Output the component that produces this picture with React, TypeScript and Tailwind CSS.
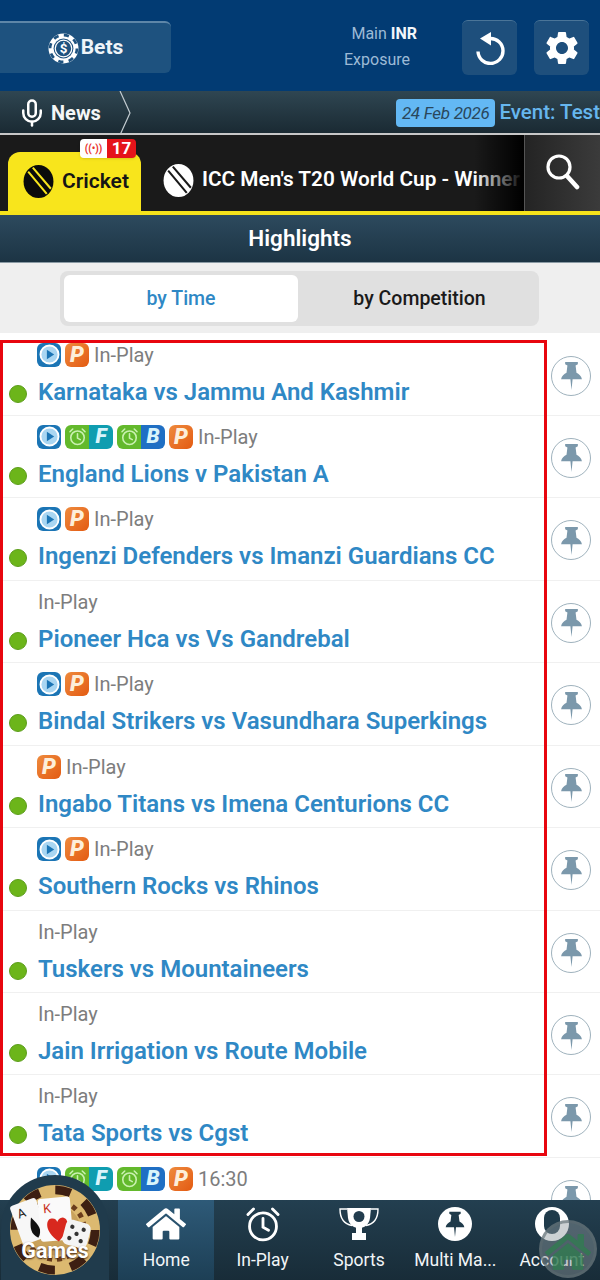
import { Mic } from "lucide-react";
import { MdSettings } from "react-icons/md";
import { FaHome } from "react-icons/fa";

const matches = [
  { name: "Karnataka vs Jammu And Kashmir", icons: ["play", "p"], time: "In-Play" },
  { name: "England Lions v Pakistan A", icons: ["play", "f", "b", "p"], time: "In-Play" },
  { name: "Ingenzi Defenders vs Imanzi Guardians CC", icons: ["play", "p"], time: "In-Play" },
  { name: "Pioneer Hca vs Vs Gandrebal", icons: [], time: "In-Play" },
  { name: "Bindal Strikers vs Vasundhara Superkings", icons: ["play", "p"], time: "In-Play" },
  { name: "Ingabo Titans vs Imena Centurions CC", icons: ["p"], time: "In-Play" },
  { name: "Southern Rocks vs Rhinos", icons: ["play", "p"], time: "In-Play" },
  { name: "Tuskers vs Mountaineers", icons: [], time: "In-Play" },
  { name: "Jain Irrigation vs Route Mobile", icons: [], time: "In-Play" },
  { name: "Tata Sports vs Cgst", icons: [], time: "In-Play" },
  { name: "", icons: ["play", "f", "b", "p"], time: "16:30" },
];

function Ball({ fg, bg, size }: { fg: string; bg: string; size: number }) {
  return (
    <svg className="shrink-0" width={size} height={size} viewBox="0 0 32 32">
      <ellipse cx="16" cy="16" rx="14.5" ry="16" fill={fg} />
      <path d="M10.5 2.5 L28 23 M6 6.5 L24 28" stroke={bg} strokeWidth="2" />
    </svg>
  );
}

function Chip() {
  return (
    <svg className="shrink-0" width="31" height="31" viewBox="0 0 30 30">
      <circle cx="15" cy="15" r="14.5" fill="#fff" />
      <circle cx="15" cy="15" r="13" fill="none" stroke="#1e527f" strokeWidth="2.6" strokeDasharray="5 5.2" />
      <circle cx="15" cy="15" r="9.6" fill="#1e527f" />
      <circle cx="15" cy="15" r="8" fill="none" stroke="#fff" strokeWidth="1.2" />
      <text x="15" y="19.5" textAnchor="middle" fontSize="13" fontWeight="700" fill="#fff" fontFamily="Roboto">$</text>
    </svg>
  );
}

function Refresh() {
  return (
    <svg width="30" height="33" viewBox="0 0 30 33" fill="none">
      <path d="M3 19.5 A12.5 12.5 0 1 0 15 6.5" stroke="#fff" strokeWidth="3.4" />
      <path d="M16 0 L16 13.5 L5 6.5 Z" fill="#fff" />
    </svg>
  );
}

function Magnifier() {
  return (
    <svg width="34" height="36" viewBox="0 0 34 36" fill="none" stroke="#fff">
      <circle cx="13" cy="13" r="11" strokeWidth="3.2" />
      <path d="M21 22 L31 33" strokeWidth="4.6" strokeLinecap="round" />
    </svg>
  );
}

function Alarm({ color, size, sw = 2 }: { color: string; size: number; sw?: number }) {
  return (
    <svg width={size} height={size} viewBox="0 0 24 24" fill="none" stroke={color} strokeWidth={sw} strokeLinecap="round">
      <circle cx="12" cy="13.5" r="8.5" />
      <path d="M12 8.5 V14 L15.5 16" />
      <path d="M2.5 6 L6 2.5 M21.5 6 L18 2.5" />
    </svg>
  );
}

function PlayBadge() {
  return (
    <span className="flex h-6 w-6 shrink-0 items-center justify-center rounded-[6px] bg-[#1b75b5]">
      <svg width="21" height="21" viewBox="0 0 20 20">
        <circle cx="10" cy="10" r="8.6" fill="#a9d6f2" stroke="#fff" strokeWidth="1.8" />
        <path d="M7.5 5.5 L14.5 10 L7.5 14.5 Z" fill="#1b75b5" />
      </svg>
    </span>
  );
}

function PBadge() {
  return (
    <span className="flex h-6 w-6 shrink-0 items-center justify-center rounded-[6px] bg-gradient-to-br from-[#ee8a3c] to-[#e35a0e] text-[22px] leading-none font-black italic text-[#fdeeda]">
      P
    </span>
  );
}

function PairBadge({ letter, color }: { letter: string; color: string }) {
  return (
    <span className="flex h-6 w-12 shrink-0 overflow-hidden rounded-[6px]">
      <span className="flex w-6 items-center justify-center bg-[#63b92c]">
        <Alarm color="#c9f0b0" size={19} />
      </span>
      <span className={`flex w-6 items-center justify-center text-[21px] leading-none font-black italic text-[#d9f4fb] ${color}`}>
        {letter}
      </span>
    </span>
  );
}

function Pin({ color, size }: { color: string; size: number }) {
  return (
    <svg width={size} height={size} viewBox="0 0 24 32" fill={color}>
      <path d="M5 1 H19 V3.5 L16.5 5 L17.5 13 C20 14.5 23 16.5 23.5 20 H13.2 L12 32 L10.8 20 H0.5 C1 16.5 4 14.5 6.5 13 L7.5 5 L5 3.5 Z" />
    </svg>
  );
}

function Trophy() {
  return (
    <svg width="40" height="34" viewBox="0 0 40 34" fill="none">
      <path d="M8 1 H32 L31 11 C30 18 25 21 20 21 C15 21 10 18 9 11 Z" fill="#fff" />
      <circle cx="20" cy="9.5" r="5.5" fill="#223d4e" />
      <path d="M8 2 H1 C1 11 5 17 13 18.5 M32 2 H39 C39 11 35 17 27 18.5" stroke="#fff" strokeWidth="1.4" />
      <path d="M17 20 H23 V26 H27 V33 H13 V26 H17 Z" fill="#fff" />
    </svg>
  );
}

function GamesBadge() {
  return (
    <div className="absolute bottom-0 left-[1px] z-20 h-[105px] w-[108px] rounded-t-full bg-[#203b4c]">
      <svg className="absolute left-[9px] top-[10px]" width="90" height="90" viewBox="0 0 92 92">
        <circle cx="46" cy="46" r="46" fill="#dcb970" />
        <circle cx="46" cy="46" r="41" fill="none" stroke="#3d1f12" strokeWidth="9" strokeDasharray="16 16.2" />
        <circle cx="46" cy="46" r="30" fill="none" stroke="#6b3d1c" strokeWidth="5" strokeDasharray="5 5" />
        <circle cx="46" cy="46" r="26" fill="#c9a25c" />
        <g transform="rotate(-20 20 38)">
          <rect x="6" y="16" width="28" height="42" rx="3" fill="#f7f7f7" />
          <text x="11" y="31" fontSize="13" fill="#222" fontFamily="Roboto">A</text>
          <path d="M23 34 C28 44 30 50 23 56 C17 50 18 44 23 34 Z" fill="#111" />
        </g>
        <g transform="rotate(-5 46 36)">
          <rect x="30" y="13" width="33" height="44" rx="3" fill="#fafafa" />
          <text x="35" y="28" fontSize="13" fill="#c8321f" fontFamily="Roboto">K</text>
          <path d="M48 58 C33 46 37 33 43 34 C46 34 48 36 48 38 C49 36 51 34 54 34 C60 35 62 46 48 58 Z" fill="#d8281e" />
        </g>
        <g transform="rotate(15 68 50)">
          <rect x="55" y="37" width="26" height="26" rx="6" fill="#f4f4f4" />
          <circle cx="62" cy="44" r="2.2" fill="#333" />
          <circle cx="74" cy="44" r="2.2" fill="#333" />
          <circle cx="68" cy="50" r="2.2" fill="#333" />
          <circle cx="62" cy="56" r="2.2" fill="#333" />
          <circle cx="74" cy="56" r="2.2" fill="#333" />
        </g>
      </svg>
      <span className="absolute left-0 top-[60px] w-full text-center text-[21.5px] font-bold text-white [text-shadow:0_1px_2px_#3d1f12]">
        Games
      </span>
    </div>
  );
}

function NavItem({ label, active, children }: { label: string; active?: boolean; children: React.ReactNode }) {
  return (
    <div className={`flex flex-1 flex-col items-center justify-end pb-[8px] ${active ? "bg-gradient-to-b from-[#2e5a78] to-[#1d3f55]" : ""}`}>
      <div className="flex h-[36px] items-center justify-center">{children}</div>
      <span className="mt-[6px] w-full truncate px-1 text-center text-[17.5px] leading-[24px] text-[#f2f5f7]">{label}</span>
    </div>
  );
}

function MatchRow({ match }: { match: (typeof matches)[number] }) {
  return (
    <div className="flex h-[82.45px] shrink-0 border-b border-[#f0f0f0]">
      <div className="flex w-[9px] shrink-0" />
      <div className="flex min-w-0 flex-1 flex-col">
        <div className="ml-[28px] mt-[8px] flex h-[26px] items-center gap-[4px]">
          {match.icons.map((icon, i) =>
            icon === "play" ? (
              <PlayBadge key={i} />
            ) : icon === "p" ? (
              <PBadge key={i} />
            ) : icon === "f" ? (
              <PairBadge key={i} letter="F" color="bg-[#0f9db0]" />
            ) : (
              <PairBadge key={i} letter="B" color="bg-[#1f6fc4]" />
            ),
          )}
          <span className="ml-[1px] text-[20px] text-[#7d7d7d]">{match.time}</span>
        </div>
        {match.name && (
          <div className="mt-[8px] flex items-center">
            <span className="mt-[4px] h-[18px] w-[18px] rounded-full border border-[#5d9e1c] bg-[#6cb51a]" />
            <span className="ml-[11px] text-[24px] leading-[32px] font-semibold text-[#2f88c5]">{match.name}</span>
          </div>
        )}
      </div>
      <div className="flex w-[58px] shrink-0 items-start pl-[9px] pt-[22px]">
        <div className="flex h-[40px] w-[40px] items-center justify-center rounded-full border border-[#9fb2bd] bg-white">
          <Pin color="#7b98ab" size={29} />
        </div>
      </div>
    </div>
  );
}

export default function App() {
  return (
    <div className="relative flex h-[1280px] w-[600px] flex-col overflow-hidden bg-white font-['Roboto',sans-serif]">
      <header className="flex h-[91px] shrink-0 items-start bg-[#023b73]">
        <div className="mt-[21px] flex h-[52px] w-[171px] items-center justify-center gap-[2px] rounded-r-[6px] border-t-2 border-[#5e86a8] bg-[#1e527f]">
          <Chip />
          <span className="text-[21px] font-bold text-[#eef4f9]">Bets</span>
        </div>
        <div className="ml-auto mt-[21px] flex flex-col items-end pr-[45px] text-[16px] leading-[26px] text-[#9dbad6]">
          <div>
            Main <b className="font-bold text-[#f2f6fa]">INR</b>
          </div>
          <div className="pr-[7px]">Exposure</div>
        </div>
        <div className="mt-[20px] flex gap-[17px] pr-[11px]">
          <div className="flex h-[55px] w-[55px] items-center justify-center rounded-[6px] border-t border-[#4b7598] bg-[#1e4f7c]">
            <Refresh />
          </div>
          <div className="flex h-[55px] w-[55px] items-center justify-center rounded-[6px] border-t border-[#4b7598] bg-[#1e4f7c]">
            <MdSettings size={40} color="#fff" />
          </div>
        </div>
      </header>

      <div className="flex h-[44px] shrink-0 items-center overflow-hidden border-b-2 border-[#c7c7c7] bg-gradient-to-b from-[#2f4652] to-[#1a2a33] pt-[1px]">
        <Mic size={30} color="#fff" strokeWidth={2} className="ml-[17px] shrink-0" />
        <span className="ml-[4px] text-[20px] font-bold text-[#f4f6f7]">News</span>
        <svg className="ml-[18px] shrink-0" width="14" height="44" viewBox="0 0 14 44" fill="none" stroke="#c3ccd1" strokeWidth="1.2">
          <path d="M1 0 L11 22 L1 44" />
        </svg>
        <span className="ml-auto rounded-[4px] bg-[#63b8f4] px-[6px] text-[17px] leading-[28px] italic tracking-[-0.3px] whitespace-nowrap text-[#29475c]">
          24 Feb 2026
        </span>
        <span className="ml-[4px] text-[20.5px] font-medium whitespace-nowrap text-[#66b6ee]">Event: Test</span>
      </div>

      <div className="flex h-[80px] shrink-0 border-b-[4px] border-[#f5e31b] bg-[#1a1a1a]">
        <div className="relative ml-[8px] mt-[17px] flex w-[133px] shrink-0 items-center justify-center gap-[7px] rounded-t-[12px] bg-[#f8e51c] pl-[2px]">
          <Ball fg="#0b0b0b" bg="#f8e51c" size={33} />
          <span className="text-[21px] font-semibold text-[#151515]">Cricket</span>
          <div className="absolute -top-[13px] left-[72px] flex h-[19px] w-[56px] overflow-hidden rounded-[4px] shadow">
            <span className="flex w-[27px] items-center justify-center bg-white text-[10px] font-bold text-[#e8302a]">((•))</span>
            <span className="flex w-[29px] items-center justify-center bg-[#e5141a] text-[17px] font-bold text-white">17</span>
          </div>
        </div>
        <div className="relative flex min-w-0 flex-1 items-center overflow-hidden pl-[21px] pt-[14px]">
          <Ball fg="#fff" bg="#1a1a1a" size={33} />
          <span className="ml-[7px] text-[20.8px] font-semibold whitespace-nowrap text-white">ICC Men's T20 World Cup - Winner</span>
          <div className="absolute top-0 right-0 h-full w-[50px] bg-gradient-to-r from-transparent to-[#000]" />
        </div>
        <div className="flex w-[76px] shrink-0 items-center justify-center border-l border-[#555] bg-gradient-to-r from-[#242424] to-[#3b3b3b] pb-[3px]">
          <Magnifier />
        </div>
      </div>

      <div className="flex h-[48px] shrink-0 items-center justify-center border-b border-[#8a9aa4] bg-gradient-to-b from-[#2d4a5e] to-[#1c3444] text-[22.5px] font-semibold text-white">
        Highlights
      </div>

      <div className="flex h-[70px] shrink-0 items-center bg-[#efefef] pl-[60px] pt-[1px]">
        <div className="flex h-[55px] w-[479px] rounded-[8px] bg-[#e0e0e0] p-[4px]">
          <div className="flex w-[234px] items-center justify-center rounded-[6px] bg-white text-[19.5px] font-medium text-[#2f88c5]">by Time</div>
          <div className="flex flex-1 items-center justify-center pl-[6px] text-[19.5px] font-medium text-[#1a1a1a]">by Competition</div>
        </div>
      </div>

      <div className="relative min-h-0 flex-1 overflow-hidden pt-[0.5px]">
        {matches.map((m, i) => (
          <MatchRow key={i} match={m} />
        ))}
        <div className="absolute left-0 top-[7px] h-[816px] w-[547px] border-[3px] border-[#e8060f]" />
      </div>

      <nav className="z-10 flex h-[80px] shrink-0 bg-gradient-to-b from-[#233f50] to-[#182c38] pl-[118px]">
        <NavItem label="Home" active>
          <FaHome size={40} color="#fff" />
        </NavItem>
        <NavItem label="In-Play">
          <Alarm color="#fff" size={38} sw={1.8} />
        </NavItem>
        <NavItem label="Sports">
          <Trophy />
        </NavItem>
        <NavItem label="Multi Ma...">
          <div className="flex h-[34px] w-[34px] items-center justify-center rounded-full bg-white">
            <Pin color="#1f3a4a" size={26} />
          </div>
        </NavItem>
        <NavItem label="Account">
          <div className="flex h-[34px] w-[34px] items-start justify-center overflow-hidden rounded-full bg-white pt-[3px]">
            <div className="h-[24px] w-[16px] rounded-full bg-[#1f3a4a]" />
          </div>
        </NavItem>
      </nav>

      <GamesBadge />

      <div className="absolute bottom-[2px] right-[3px] z-30 flex h-[58px] w-[58px] items-center justify-center rounded-full border-[3px] border-[#5b6a70]/60 bg-[#8d999d]/45 pt-[6px]">
        <FaHome size={46} color="#2f7d4f" className="opacity-75" />
      </div>
    </div>
  );
}
